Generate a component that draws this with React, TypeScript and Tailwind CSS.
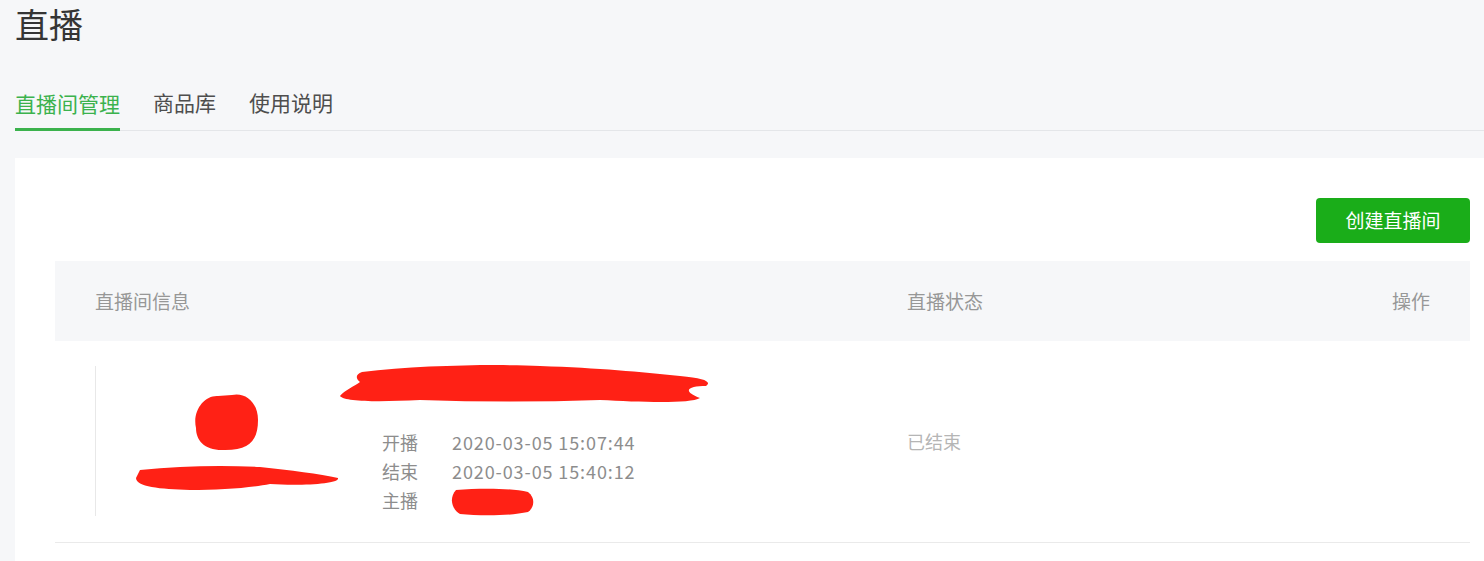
const font = { fontFamily: '"Noto Sans CJK SC", "Noto Sans", sans-serif' };

const Redactions = () => (
  <svg className="absolute left-0 top-0 pointer-events-none" width="760" height="200" viewBox="0 0 760 200">
    <g transform="translate(-55 -341)" fill="#ff2115">
      {/* cover image */}
      <path d="M218 396 C 205 395, 192 410, 196 428 C 196 440, 204 450, 222 450 C 250 451, 258 440, 258 420 C 258 402, 245 392, 232 395 Z" />
      {/* room name under cover */}
      <path d="M140 470 C 180 466, 220 465, 260 467 C 290 470, 320 474, 338 478 C 340 484, 300 486, 270 484 C 250 488, 220 490, 190 490 C 160 489, 136 487, 136 478 Z" />
      {/* title */}
      <path d="M362 372 C 420 365, 500 364, 540 366 C 600 368, 640 372, 680 376 C 705 378, 712 382, 706 386 C 690 386, 680 390, 700 398 C 690 404, 640 402, 600 400 C 540 402, 480 402, 420 400 C 380 402, 345 402, 340 396 C 345 390, 355 386, 360 382 C 355 378, 356 374, 362 372 Z" />
      {/* anchor name */}
      <path d="M456 490 C 480 488, 510 488, 528 492 C 536 498, 534 508, 528 512 C 510 516, 480 516, 460 514 C 450 508, 450 496, 456 490 Z" />
    </g>
  </svg>
);

const MetaRow = ({ label, value }: { label: string; value?: string }) => (
  <div className="flex items-center h-[29px]">
    <span className="w-[70px] text-[#8d8d8d]">{label}</span>
    <span className="text-[#8d8d8d] tracking-[0.9px]">{value}</span>
  </div>
);

export default function App() {
  return (
    <div className="w-[1484px] h-[561px] overflow-hidden bg-[#f6f7f9]" style={font}>
      <div className="pl-[15px]">
        <h1 className="text-[34px] leading-[48px] text-[#353535] h-[84px]">直播</h1>

        <div className="flex items-end gap-[33px] border-b border-[#e4e6e9] h-[47px] text-[21px] leading-[28px]">
          <div className="text-[#3bb24d] border-b-[3px] border-[#3bb24d] pb-[11px] -mb-px">直播间管理</div>
          <div className="text-[#4e4e4e] pb-[14px]">商品库</div>
          <div className="text-[#4e4e4e] pb-[14px]">使用说明</div>
        </div>

        <div className="mt-[27px] bg-white h-[420px] pl-[40px] pr-[14px] pt-[40px]">
          <div className="flex justify-end">
            <button className="w-[154px] h-[45px] rounded-[4px] bg-[#1aad19] text-white text-[19px]">创建直播间</button>
          </div>

          <div className="mt-[18px] h-[80px] bg-[#f6f7f9] flex items-center text-[19px] text-[#979797]">
            <div className="w-[852px] pl-[40px]">直播间信息</div>
            <div className="flex-1">直播状态</div>
            <div className="pr-[40px]">操作</div>
          </div>

          <div className="relative h-[202px] border-b border-[#eaeaea] flex text-[18px]">
            <Redactions />
            <div className="w-[852px] pl-[40px] pt-[25px]">
              <div className="h-[150px] border-l border-[#e8e8e8] pl-[286px] pt-[62px]">
                <MetaRow label="开播" value="2020-03-05 15:07:44" />
                <MetaRow label="结束" value="2020-03-05 15:40:12" />
                <MetaRow label="主播" />
              </div>
            </div>
            <div className="flex-1 pt-[87px] text-[#b5b5b5]">已结束</div>
          </div>
        </div>
      </div>
    </div>
  );
}
